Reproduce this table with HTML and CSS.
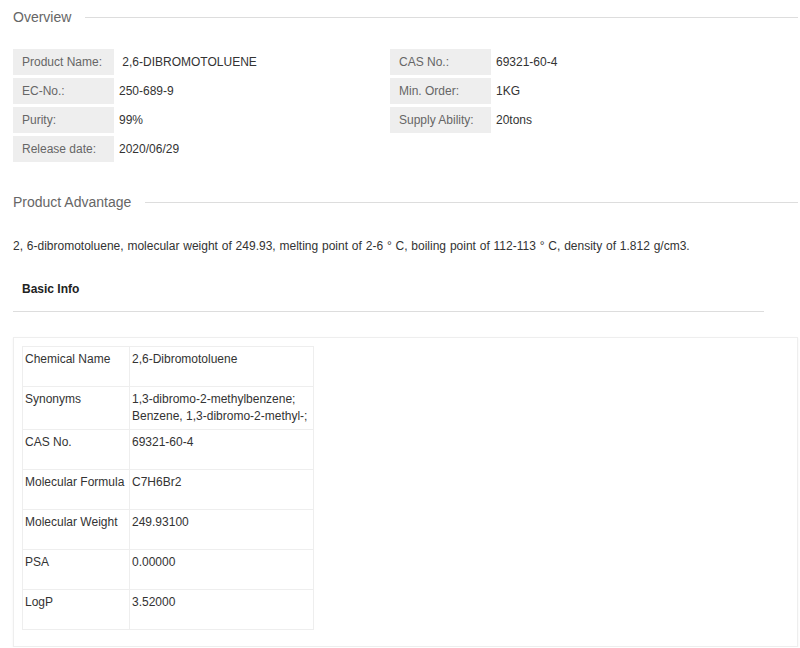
FILE: index.html
```html
<!DOCTYPE html>
<html lang="en">
<head>
    <meta charset="UTF-8">
    <title>2,6-DIBROMOTOLUENE</title>
    <link rel="stylesheet" href="styles.css">
</head>
<body>

<div class="page">

    <div class="section-title"><span>Overview</span></div>

    <div class="overview">
        <div class="ov-row"><span class="ov-label">Product Name:</span><span class="ov-value">&nbsp;2,6-DIBROMOTOLUENE</span></div>
        <div class="ov-row"><span class="ov-label">CAS No.:</span><span class="ov-value">69321-60-4</span></div>
        <div class="ov-row"><span class="ov-label">EC-No.:</span><span class="ov-value">250-689-9</span></div>
        <div class="ov-row"><span class="ov-label">Min. Order:</span><span class="ov-value">1KG</span></div>
        <div class="ov-row"><span class="ov-label">Purity:</span><span class="ov-value">99%</span></div>
        <div class="ov-row"><span class="ov-label">Supply Ability:</span><span class="ov-value">20tons</span></div>
        <div class="ov-row"><span class="ov-label">Release date:</span><span class="ov-value">2020/06/29</span></div>
    </div>

    <div class="section-title advantage"><span>Product Advantage</span></div>

    <p class="advantage-text">2, 6-dibromotoluene, molecular weight of 249.93, melting point of 2-6 ° C, boiling point of 112-113 ° C, density of 1.812 g/cm3.</p>

    <div class="basic-head">Basic Info</div>

    <div class="basic-card">
        <table class="basic-table">
            <tr><td class="name">Chemical Name</td><td>2,6-Dibromotoluene</td></tr>
            <tr><td class="name">Synonyms</td><td>1,3-dibromo-2-methylbenzene;<br>Benzene, 1,3-dibromo-2-methyl-;</td></tr>
            <tr><td class="name">CAS No.</td><td>69321-60-4</td></tr>
            <tr><td class="name">Molecular Formula</td><td>C7H6Br2</td></tr>
            <tr><td class="name">Molecular Weight</td><td>249.93100</td></tr>
            <tr><td class="name">PSA</td><td>0.00000</td></tr>
            <tr><td class="name">LogP</td><td>3.52000</td></tr>
        </table>
    </div>

</div>

</body>
</html>
```

FILE: styles.css
```css
body {
    margin: 0;
    font-family: "Liberation Sans", Arial, sans-serif;
    font-size: 12px;
    color: #333;
    background: #fff;
}

.page {
    padding: 7px 2px 0 13px;
}

.section-title {
    display: flex;
    align-items: center;
    height: 20px;
    font-size: 14px;
    color: #666;
}

.section-title::after {
    content: "";
    flex: 1;
    height: 1px;
    margin-left: 14px;
    margin-top: 1px;
    background: #ddd;
}

.overview {
    display: grid;
    grid-template-columns: 377px 1fr;
    row-gap: 3px;
    margin-top: 22px;
}

.ov-row {
    display: flex;
    height: 26px;
    align-items: stretch;
}

.ov-label {
    width: 92px;
    padding-left: 9px;
    background: #eee;
    color: #666;
    display: flex;
    align-items: center;
}

.ov-value {
    padding-left: 5px;
    color: #333;
    display: flex;
    align-items: center;
}

.advantage {
    margin-top: 30px;
}

.advantage-text {
    margin: 26px 0 0;
    line-height: 16px;
    word-spacing: 0.5px;
}

.basic-head {
    margin: 27px 34px 0 0;
    padding: 0 9px;
    height: 30px;
    line-height: 16px;
    font-weight: bold;
    color: #222;
    border-bottom: 1px solid #ddd;
}

.basic-card {
    margin-top: 25px;
    padding: 8px;
    border: 1px solid #eee;
    box-shadow: 0 1px 2px rgba(0, 0, 0, 0.06);
}

.basic-table {
    border-collapse: collapse;
    margin-bottom: 8px;
}

.basic-table td {
    height: 31px;
    padding: 4px 2px 4px 2px;
    line-height: 17px;
    vertical-align: top;
    border: 1px solid #eee;
    color: #333;
}

.basic-table td.name {
    width: 102px;
}

.basic-table td + td {
    width: 179px;
}
```
